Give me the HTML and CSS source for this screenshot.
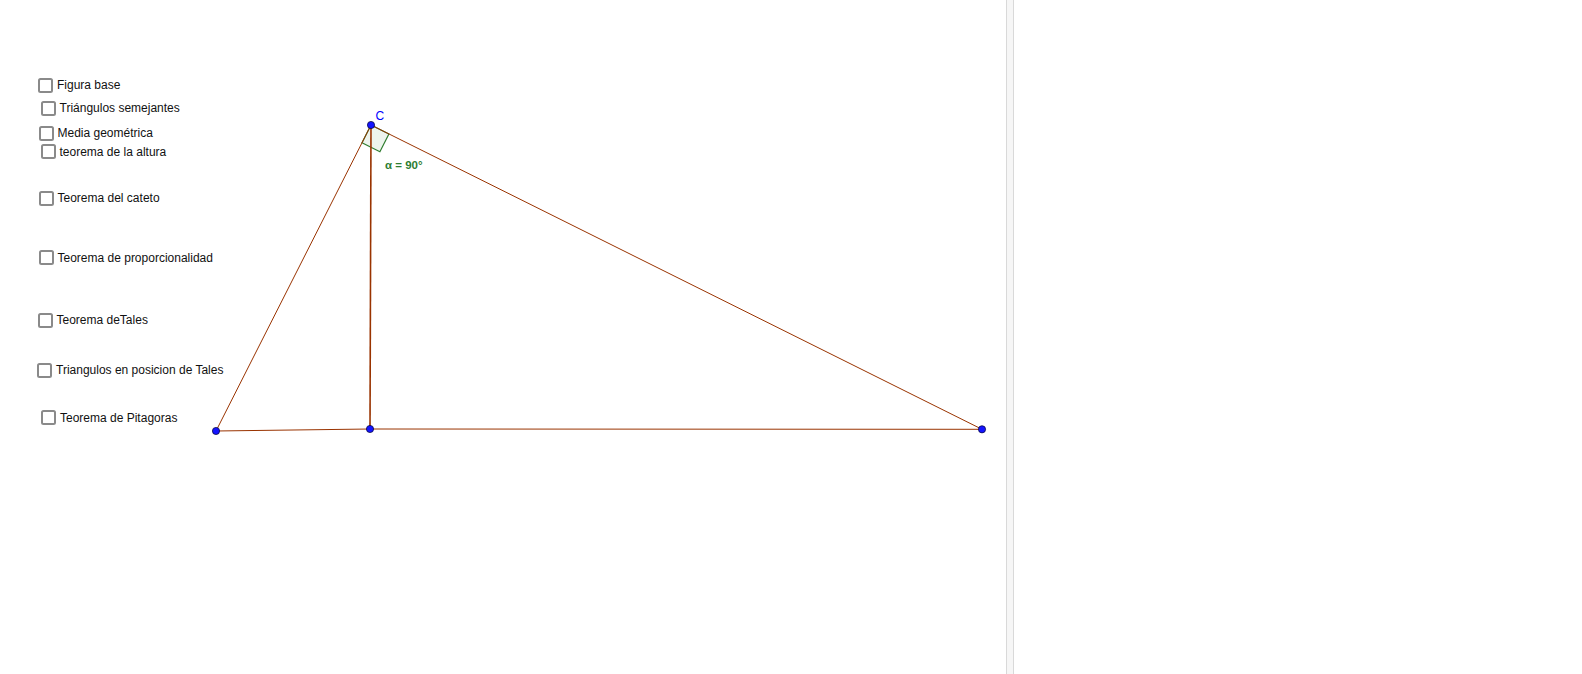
FILE: index.html
```html
<!DOCTYPE html>
<html lang="es">
<head>
<meta charset="utf-8">
<title>GeoGebra</title>
<link rel="stylesheet" href="styles.css">
</head>
<body>
<div class="app">
  <div class="graphics">
    <svg class="drawing" width="1006" height="674" viewBox="0 0 1006 674">
      <polygon class="angle" points="371,125 362,142.8 379.9,151.7 388.9,133.9"/>
      <line class="seg" x1="216" y1="431" x2="371" y2="125"/>
      <line class="seg" x1="371" y1="125" x2="982" y2="429.3"/>
      <line class="seg" x1="216" y1="431" x2="370" y2="429"/>
      <line class="seg" x1="370" y1="429" x2="982" y2="429.3"/>
      <line class="seg alt" x1="371" y1="125" x2="370" y2="429"/>
      <circle class="pt" cx="216" cy="431" r="3.6"/>
      <circle class="pt" cx="370" cy="429" r="3.6"/>
      <circle class="pt" cx="982" cy="429.3" r="3.6"/>
      <circle class="pt" cx="371" cy="125" r="3.6"/>
      <text class="lbl-c" x="375.5" y="119.5">C</text>
      <text class="lbl-a" x="385" y="169">α = 90°</text>
    </svg>
    <label class="cb" style="left:38px;top:77px"><span class="box"></span>Figura base</label>
    <label class="cb" style="left:40.5px;top:100.3px"><span class="box"></span>Triángulos semejantes</label>
    <label class="cb" style="left:38.5px;top:125px"><span class="box"></span>Media geométrica</label>
    <label class="cb" style="left:40.5px;top:143.7px"><span class="box"></span>teorema de la altura</label>
    <label class="cb" style="left:38.5px;top:190.2px"><span class="box"></span>Teorema del cateto</label>
    <label class="cb" style="left:38.5px;top:249.7px"><span class="box"></span>Teorema de proporcionalidad</label>
    <label class="cb" style="left:37.5px;top:312px"><span class="box"></span>Teorema deTales</label>
    <label class="cb" style="left:37px;top:362.2px"><span class="box"></span>Triangulos en posicion de Tales</label>
    <label class="cb" style="left:41px;top:409.7px"><span class="box"></span>Teorema de Pitagoras</label>
  </div>
  <div class="splitter"></div>
  <div class="algebra"></div>
</div>
</body>
</html>
```
FILE: styles.css
```css
html, body {
  margin: 0;
  padding: 0;
  background: #ffffff;
  overflow: hidden;
}
.app {
  display: flex;
  width: 1582px;
  height: 674px;
  font-family: "Liberation Sans", Arial, sans-serif;
}
.graphics {
  position: relative;
  width: 1006px;
  height: 674px;
  flex: none;
  background: #ffffff;
}
.drawing {
  display: block;
}
.splitter {
  width: 6px;
  flex: none;
  background: #f6f6f6;
  border-left: 1px solid #d9d9d9;
  border-right: 1px solid #d9d9d9;
}
.algebra {
  flex: 1;
  background: #ffffff;
}
.seg {
  stroke: #993300;
  stroke-width: 1;
}
.seg.alt {
  stroke-width: 1.6;
}
.angle {
  fill: rgba(0, 100, 0, 0.07);
  stroke: #2f7d2f;
  stroke-width: 1.2;
}
.pt {
  fill: #1414ff;
  stroke: #000033;
  stroke-width: 0.7;
}
.lbl-c {
  font-family: "Liberation Sans", Arial, sans-serif;
  font-size: 12px;
  fill: #0000ff;
}
.lbl-a {
  font-family: "Liberation Sans", Arial, sans-serif;
  font-size: 11.5px;
  font-weight: bold;
  fill: #2e7d32;
}
.cb {
  position: absolute;
  display: flex;
  align-items: center;
  gap: 4px;
  height: 16px;
  font-size: 12px;
  color: #111111;
  white-space: nowrap;
  cursor: pointer;
}
.box {
  width: 11px;
  height: 11px;
  border: 2px solid #8a8a8a;
  border-radius: 2.5px;
  background: #ffffff;
  flex: none;
}
```
